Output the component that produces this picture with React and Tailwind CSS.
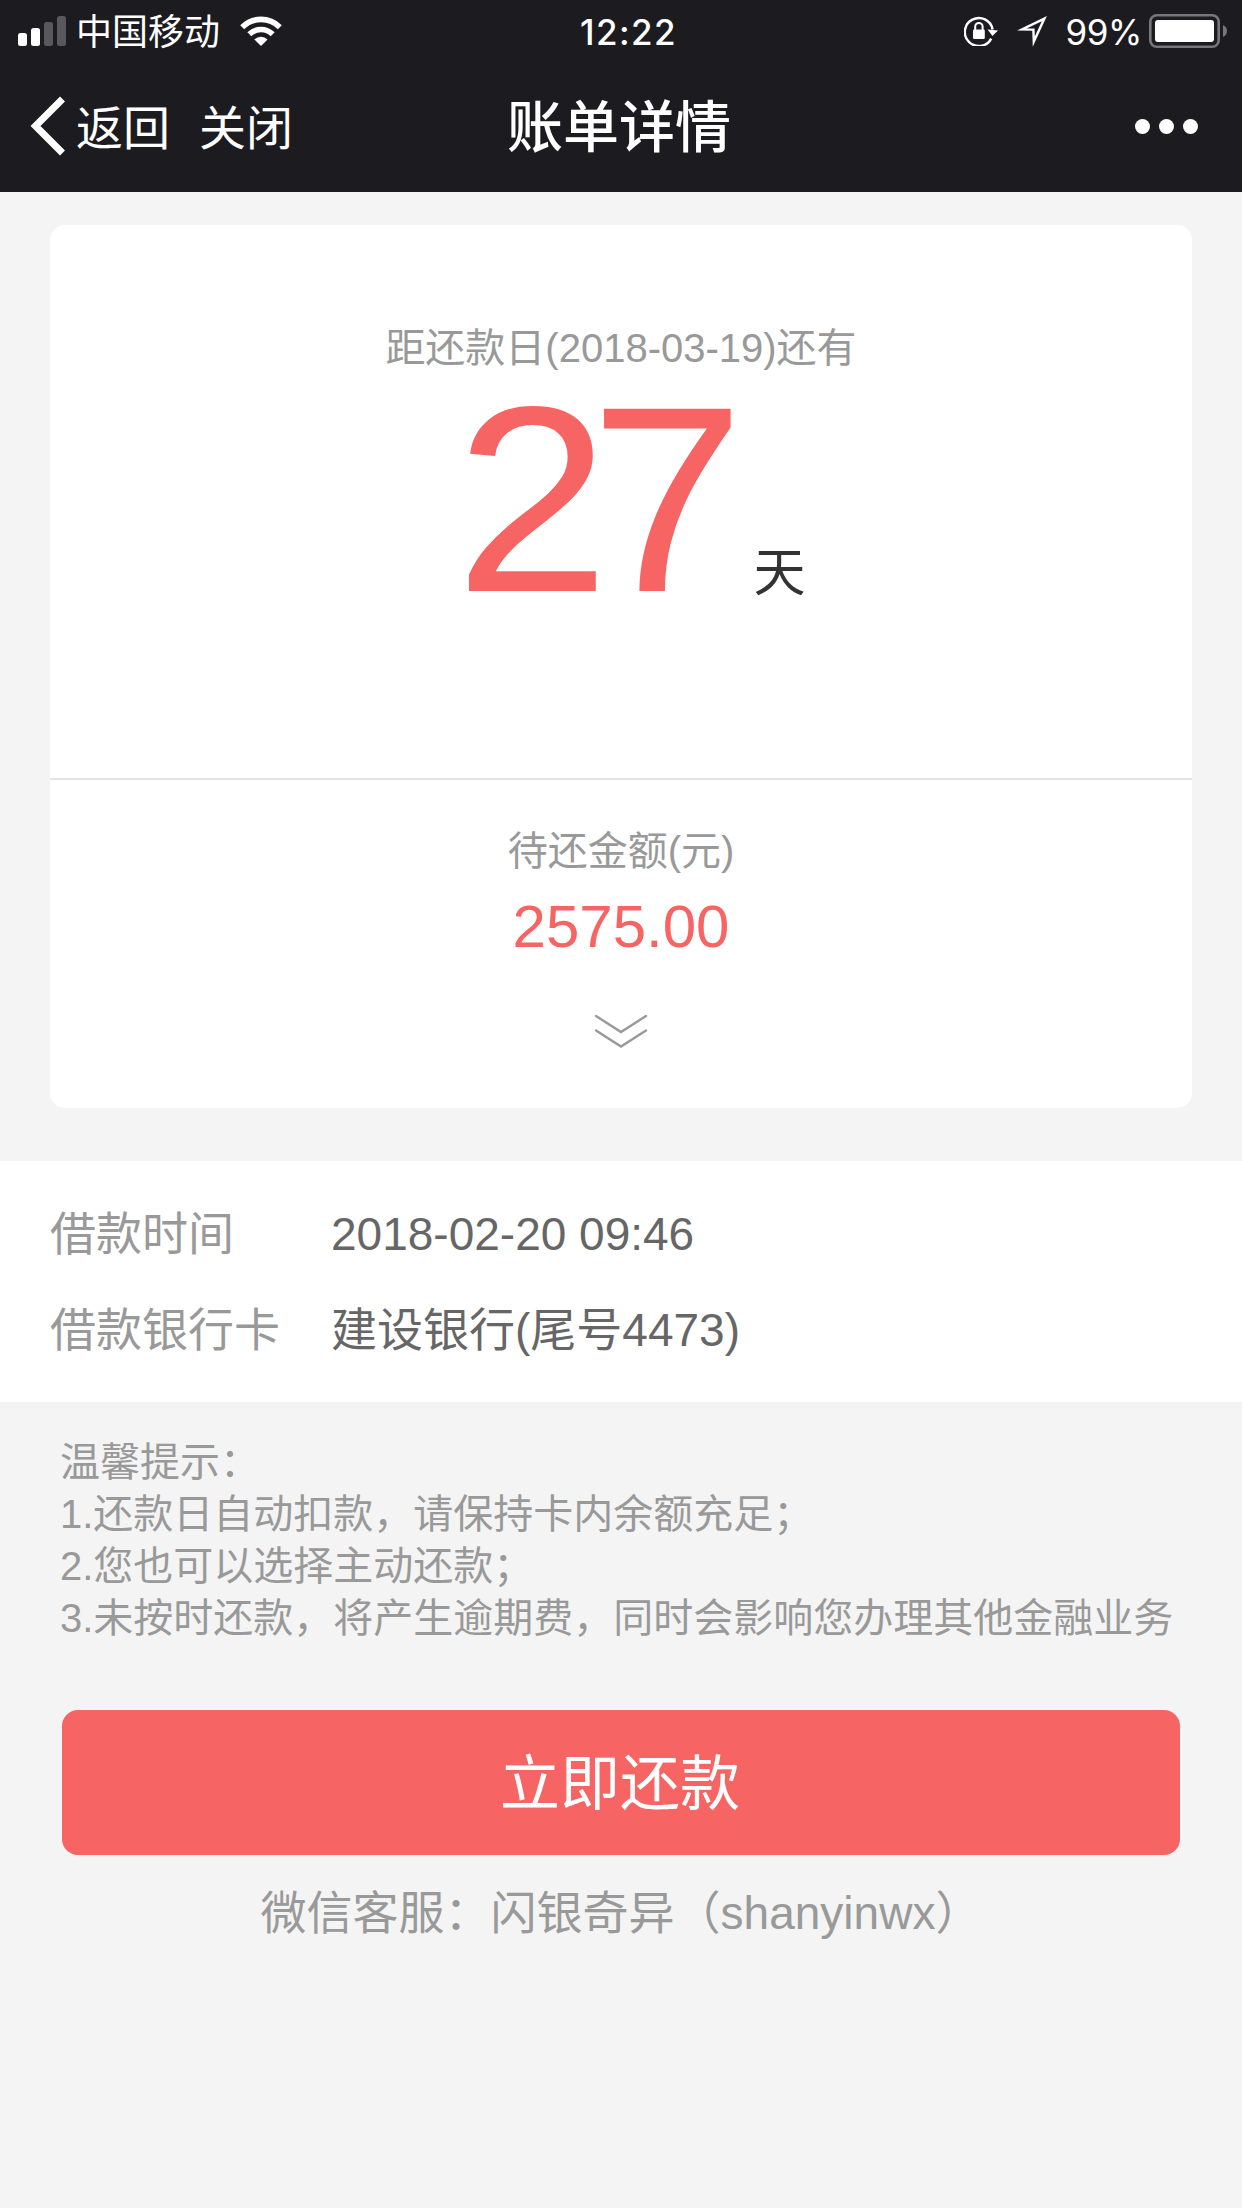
import React from 'react';

const details = [
  { id: 1, label: '借款时间', value: '2018-02-20 09:46' },
  { id: 2, label: '借款银行卡', value: '建设银行(尾号4473)' }
];

const tips = [
  '温馨提示：',
  '1.还款日自动扣款，请保持卡内余额充足；',
  '2.您也可以选择主动还款；',
  '3.未按时还款，将产生逾期费，同时会影响您办理其他金融业务'
];

const SignalIcon = () => (
  <svg width="48" height="30" viewBox="0 0 48 30" fill="#fff">
    <rect x="0" y="17" width="9" height="13" rx="2.5" />
    <rect x="13" y="12" width="9" height="18" rx="2.5" />
    <rect x="26" y="6" width="9" height="24" rx="2.5" opacity="0.27" />
    <rect x="39" y="0" width="9" height="30" rx="2.5" opacity="0.27" />
  </svg>
);

const WifiIcon = () => (
  <svg width="42" height="30" viewBox="0 0 42 30">
    <path d="M2.2 11.2 A26.5 26.5 0 0 1 39.8 11.2" fill="none" stroke="#fff" strokeWidth="5.6" />
    <path d="M9.3 18.3 A16.6 16.6 0 0 1 32.7 18.3" fill="none" stroke="#fff" strokeWidth="5.6" />
    <path d="M21 30 L14.4 23.4 A9.4 9.4 0 0 1 27.6 23.4 Z" fill="#fff" />
  </svg>
);

const RotationLockIcon = () => (
  <svg width="34" height="30" viewBox="0 0 34 30">
    <path d="M27.2 22.6 A14 14 0 1 1 28.6 13.5" fill="none" stroke="#fff" strokeWidth="2.4" />
    <path d="M23.6 13.6 L34 14.4 L28.4 20 Z" fill="#fff" />
    <path d="M11.2 14 V10.6 A3.7 3.7 0 0 1 18.6 10.6 V14" fill="none" stroke="#fff" strokeWidth="2" />
    <rect x="9" y="13.6" width="11.8" height="9.4" rx="1.2" fill="#fff" />
  </svg>
);

const LocationIcon = () => (
  <svg width="30" height="31" viewBox="0 0 30 31">
    <path d="M27.4 2.6 L5 13.4 L16.4 13.6 L16.8 25.6 Z" fill="none" stroke="#fff" strokeWidth="2.4" strokeMiterlimit="8" />
  </svg>
);

const BatteryIcon = () => (
  <svg width="78" height="34" viewBox="0 0 78 34">
    <rect x="1.3" y="1.3" width="68.4" height="31.4" rx="6.5" fill="none" stroke="#77767a" strokeWidth="2.6" />
    <rect x="6" y="6" width="59" height="22" rx="3" fill="#fff" />
    <path d="M74 11 Q78 13 78 17 Q78 21 74 23 Z" fill="#77767a" />
  </svg>
);

const Header = () => (
  <header className="h-[192px] bg-[#1c1b20] text-white font-['Noto_Sans_CJK_SC',sans-serif]">
    <div className="h-[60px] grid grid-cols-3 items-center">
      <div className="flex items-center pl-[18px]">
        <SignalIcon />
        <span className="ml-[10px] pb-[3px] text-[36px] leading-[57px]">中国移动</span>
        <span className="ml-[20px]"><WifiIcon /></span>
      </div>
      <div className="pl-[15px] pt-[2px] text-center font-['Inter',sans-serif] font-medium text-[35px] leading-[60px] tracking-[1.4px]">
        12:22
      </div>
      <div className="flex items-center justify-end pr-[15px]">
        <RotationLockIcon />
        <span className="ml-[19px]"><LocationIcon /></span>
        <span className="ml-[18px] pt-[2px] font-['Inter',sans-serif] text-[35px] leading-[60px] tracking-[-0.4px]">99%</span>
        <span className="ml-[7px]"><BatteryIcon /></span>
      </div>
    </div>

    <nav className="h-[132px] grid grid-cols-3 items-center">
      <div className="flex items-center pl-[30px] text-[47px]">
        <svg width="36" height="60" viewBox="0 0 36 60">
          <path d="M32.5 3 L5.5 30 L32.5 57" fill="none" stroke="#fff" strokeWidth="7" />
        </svg>
        <span className="ml-[10px] pb-[2px]">返回</span>
        <span className="ml-[29px] pb-[2px]">关闭</span>
      </div>
      <h1 className="pr-[4px] pb-[6px] text-center text-[56px] font-medium">账单详情</h1>
      <div className="flex justify-end gap-[9px] pr-[44px]">
        <span className="size-[15px] rounded-full bg-white" />
        <span className="size-[15px] rounded-full bg-white" />
        <span className="size-[15px] rounded-full bg-white" />
      </div>
    </nav>
  </header>
);

const BillCard = () => (
  <section className="mx-[50px] mt-[33px] h-[883px] rounded-[15px] bg-white text-center">
    {/* Days left */}
    <div className="h-[555px] border-b-2 border-[#e4e4e4] pt-[93px]">
      <p className="text-[40px] leading-[60px] text-[#999]">距还款日(2018-03-19)还有</p>
      <div className="flex items-baseline justify-center pl-[18px] leading-[243px]">
        <span className="origin-left scale-x-105 text-[265px] tracking-[-19px] text-[#f66464]">27</span>
        <span className="ml-[42px] text-[52px] text-[#333]">天</span>
      </div>
    </div>

    {/* Amount due */}
    <div className="pt-[41px]">
      <p className="text-[40px] leading-[60px] text-[#999]">待还金额(元)</p>
      <p className="mt-[6px] text-[60px] leading-[80px] text-[#f66464]">2575.00</p>
      <svg className="mx-auto mt-[46px]" width="54" height="36" viewBox="0 0 54 36">
        <path d="M2 3 L27 19 L52 3 M2 17.5 L27 33.5 L52 17.5" fill="none" stroke="#999" strokeWidth="2.4" strokeLinecap="round" />
      </svg>
    </div>
  </section>
);

const App = () => {
  return (
    <div className="h-[2208px] w-[1242px] overflow-hidden bg-[#f4f4f4] font-['Liberation_Sans','Noto_Sans_CJK_SC',sans-serif]">
      <Header />
      <BillCard />

      <section className="mt-[53px] h-[241px] bg-white pt-[25px] pl-[50px] text-[46px] leading-[96px]">
        {details.map((item) => (
          <div key={item.id} className="flex">
            <span className="w-[281px] text-[#999]">{item.label}</span>
            <span className="text-[#666]">{item.value}</span>
          </div>
        ))}
      </section>

      <section className="mt-[34px] pl-[60px] text-[40px] leading-[52px] text-[#999]">
        {tips.map((tip) => (
          <p key={tip} className="whitespace-nowrap">{tip}</p>
        ))}
      </section>

      <button className="mx-[62px] mt-[66px] block h-[145px] w-[1118px] rounded-[16px] bg-[#f66464] pt-[4px] pr-[2px] text-[60px] text-white">
        立即还款
      </button>
      <p className="mt-[28px] text-center text-[46px] leading-[60px] text-[#999]">
        微信客服：闪银奇异（shanyinwx）
      </p>
    </div>
  );
};

export default App;
